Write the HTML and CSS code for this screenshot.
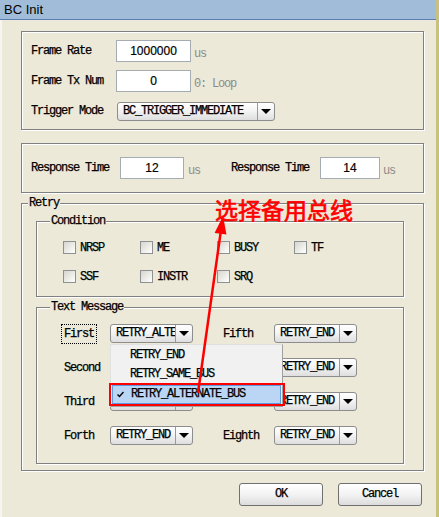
FILE: index.html
```html
<!DOCTYPE html>
<html>
<head>
<meta charset="utf-8">
<link rel="stylesheet" href="styles.css">
</head>
<body>
<div class="window">
  <div class="titlebar">BC Init</div>
  <div class="client">
    <fieldset class="group g1">
      <div class="row"><span class="lbl w85">Frame Rate</span><span class="edit e75">1000000</span><span class="unit">us</span></div>
      <div class="row"><span class="lbl w85">Frame Tx Num</span><span class="edit e75">0</span><span class="unit">0: Loop</span></div>
      <div class="row"><span class="lbl w85">Trigger Mode</span><span class="combo c158"><span class="val">BC_TRIGGER_IMMEDIATE</span><span class="btn"><i class="tri"></i></span></span></div>
    </fieldset>
    <fieldset class="group g2">
      <div class="row">
        <span class="lbl w89">Response Time</span><span class="edit e64">12</span><span class="unit u46">us</span>
        <span class="lbl w89">Response Time</span><span class="edit e60">14</span><span class="unit">us</span>
      </div>
    </fieldset>
    <fieldset class="group retry">
      <legend>Retry</legend>
      <fieldset class="group cond">
        <legend>Condition</legend>
        <div class="checks">
          <label class="chk"><i class="box"></i>NRSP</label>
          <label class="chk"><i class="box"></i>ME</label>
          <label class="chk"><i class="box"></i>BUSY</label>
          <label class="chk"><i class="box"></i>TF</label>
          <label class="chk"><i class="box"></i>SSF</label>
          <label class="chk"><i class="box"></i>INSTR</label>
          <label class="chk"><i class="box"></i>SRQ</label>
        </div>
      </fieldset>
      <fieldset class="group msg">
        <legend>Text Message</legend>
        <div class="msggrid">
          <span class="lbl"><span class="focus">First</span></span>
          <span class="combo"><span class="val">RETRY_ALTERNATE_BUS</span><span class="btn"><i class="tri"></i></span></span>
          <span class="lbl">Fifth</span>
          <span class="combo"><span class="val">RETRY_END</span><span class="btn"><i class="tri"></i></span></span>

          <span class="lbl">Second</span>
          <span class="combo"><span class="val">RETRY_END</span><span class="btn"><i class="tri"></i></span></span>
          <span class="lbl">Sixth</span>
          <span class="combo"><span class="val">RETRY_END</span><span class="btn"><i class="tri"></i></span></span>

          <span class="lbl">Third</span>
          <span class="combo"><span class="val">RETRY_END</span><span class="btn"><i class="tri"></i></span></span>
          <span class="lbl">Seventh</span>
          <span class="combo"><span class="val">RETRY_END</span><span class="btn"><i class="tri"></i></span></span>

          <span class="lbl">Forth</span>
          <span class="combo"><span class="val">RETRY_END</span><span class="btn"><i class="tri"></i></span></span>
          <span class="lbl">Eighth</span>
          <span class="combo"><span class="val">RETRY_END</span><span class="btn"><i class="tri"></i></span></span>
        </div>
      </fieldset>
    </fieldset>
    <div class="buttons">
      <span class="button">OK</span>
      <span class="button">Cancel</span>
    </div>
  </div>

  <div class="dropdown">
    <div class="item">RETRY_END</div>
    <div class="item">RETRY_SAME_BUS</div>
    <div class="item sel"><svg class="check" width="7" height="7" viewBox="0 0 7 7"><path d="M0.5 3.5 L2.5 5.5 L6.5 1" fill="none" stroke="#000" stroke-width="1.4"/></svg>RETRY_ALTERNATE_BUS</div>
  </div>
  <div class="redbox"></div>
  <div class="note">选择备用总线</div>
  <svg class="arrow" width="439" height="517" viewBox="0 0 439 517">
    <line x1="198" y1="393" x2="221" y2="230" stroke="#ff0000" stroke-width="2.5"/>
    <polygon points="223,216 226.5,234.6 214.6,233" fill="#ff0000"/>
  </svg>
</div>
</body>
</html>
```
FILE: styles.css
```css
* { box-sizing: border-box; }
body { margin: 0; background: #ece9d8; }

.window {
  position: relative;
  width: 439px;
  height: 517px;
  overflow: hidden;
  background: #ece9d8;
  border-right: 3px solid #c9c27e;
  box-shadow: inset 2px 0 0 #f6f5ef;
  font-family: "Liberation Mono", "Courier New", monospace;
  font-size: 12px;
  font-weight: normal;
  letter-spacing: -1.2px;
  -webkit-text-stroke: 0.25px #000;
  color: #000;
}

.titlebar {
  height: 20px;
  background: #a0bcd9;
  border-bottom: 1px solid #5a7db3;
  font-family: "Liberation Sans", sans-serif;
  font-weight: normal;
  font-size: 13px;
  letter-spacing: 0;
  -webkit-text-stroke: 0;
  line-height: 19px;
  padding-left: 4px;
  color: #000;
}

.client { padding: 11px 0 0 21px; }

.group {
  margin: 0;
  padding: 0;
  min-width: 0;
  border: 1px solid #808080;
  box-shadow: inset 1px 1px 0 #fff, 1px 1px 0 #fff;
}
.group > legend {
  padding: 0 1px;
  height: 13px;
  line-height: 13px;
  background: #ece9d8;
}

.g1 { width: 403px; padding: 8px 0 7px 9px; }
.g2 { width: 403px; margin-top: 13px; padding: 13px 0 13px 9px; }
.retry { width: 403px; margin-top: 4px; padding: 5px 0 6px 14px; }
.retry > legend { margin-left: -8px; }
.cond { width: 368px; padding: 13px 0 13px 26px; }
.cond > legend { margin-left: -13px; }
.msg { width: 368px; margin-top: 4px; padding: 10px 0 18px 27px; }
.msg > legend { margin-left: -14px; }

.row { display: flex; align-items: center; height: 22px; }
.row + .row { margin-top: 8px; }

.lbl { white-space: nowrap; }
.w85 { width: 85px; flex: none; }
.w89 { width: 89px; flex: none; }

.edit {
  flex: none;
  height: 22px;
  border: 1px solid #a5acb2;
  background: #fff;
  text-align: center;
  font-family: "Liberation Sans", sans-serif;
  font-size: 12px;
  letter-spacing: 0;
  -webkit-text-stroke: 0.2px #000;
  line-height: 20px;
}
.e75 { width: 75px; }
.e64 { width: 64px; }
.e60 { width: 60px; }

.unit {
  align-self: flex-end;
  margin-left: 3px;
  color: #8c8c8c;
  -webkit-text-stroke: 0;
  line-height: 16px;
}
.u46 { width: 43px; margin-left: 4px; flex: none; }

.combo {
  display: flex;
  height: 19px;
  border: 1px solid #8d8d8d;
  border-radius: 3px;
  background: linear-gradient(#ffffff, #f4f4f4 45%, #dedede);
  overflow: hidden;
}
.c158 { width: 158px; margin-left: 1px; }
.combo .val {
  flex: 1;
  min-width: 0;
  padding-left: 5px;
  overflow: hidden;
  white-space: nowrap;
  line-height: 17px;
}
.combo .btn {
  flex: none;
  width: 17px;
  border-left: 1px solid #9a9a9a;
  display: flex;
  align-items: center;
  justify-content: center;
}
.tri {
  display: block;
  width: 0;
  height: 0;
  border-left: 5px solid transparent;
  border-right: 5px solid transparent;
  border-top: 5px solid #000;
}

.checks {
  display: grid;
  grid-template-columns: repeat(4, 77px);
  grid-auto-rows: 13px;
  row-gap: 16px;
}
.chk { display: flex; align-items: center; gap: 4px; height: 13px; }
.box {
  flex: none;
  width: 13px;
  height: 13px;
  border: 1px solid #8f9092;
  background: linear-gradient(135deg, #d6d5cf, #f3f3ef 70%, #fff);
}

.msggrid {
  display: grid;
  grid-template-columns: 46px 113px 51px 83px;
  grid-auto-rows: 19px;
  row-gap: 15px;
  align-items: center;
}
.msggrid > .combo:nth-child(4n+2) { margin-right: 30px; }
.focus { outline: 1px dotted #000; outline-offset: 2px; }

.buttons {
  width: 403px;
  display: flex;
  justify-content: flex-end;
  gap: 15px;
  padding-right: 2px;
  margin-top: 12px;
}
.button {
  width: 84px;
  height: 23px;
  border: 1px solid #707070;
  border-radius: 3px;
  background: linear-gradient(#ffffff, #f3f3f3 50%, #dcdcdc);
  text-align: center;
  line-height: 21px;
}

.dropdown {
  position: absolute;
  left: 110px;
  top: 344px;
  width: 173px;
  height: 63px;
  background: #f1f1f1;
  border: 1px solid #a0a0a0;
  border-left-color: #e0e0e0;
  border-top-color: #e0e0e0;
  padding: 1px 1px 0 1px;
}
.item {
  position: relative;
  height: 19px;
  line-height: 19px;
  padding-left: 18px;
  white-space: nowrap;
}
.item.sel {
  margin-top: 1px;
  background: #bad6f4;
  border: 1px solid #5d9ae0;
  line-height: 17px;
}
.check { position: absolute; left: 4px; top: 5px; }
.redbox {
  position: absolute;
  left: 109px;
  top: 383px;
  width: 176px;
  height: 23px;
  border: 2px solid #ff0000;
}
.note {
  position: absolute;
  left: 215px;
  top: 195px;
  font-family: "Noto Sans CJK SC", sans-serif;
  font-size: 23px;
  font-weight: normal;
  letter-spacing: 0;
  -webkit-text-stroke: 0.7px #ff0000;
  line-height: 28px;
  color: #ff0000;
}
.arrow { position: absolute; left: 0; top: 0; pointer-events: none; }
```
